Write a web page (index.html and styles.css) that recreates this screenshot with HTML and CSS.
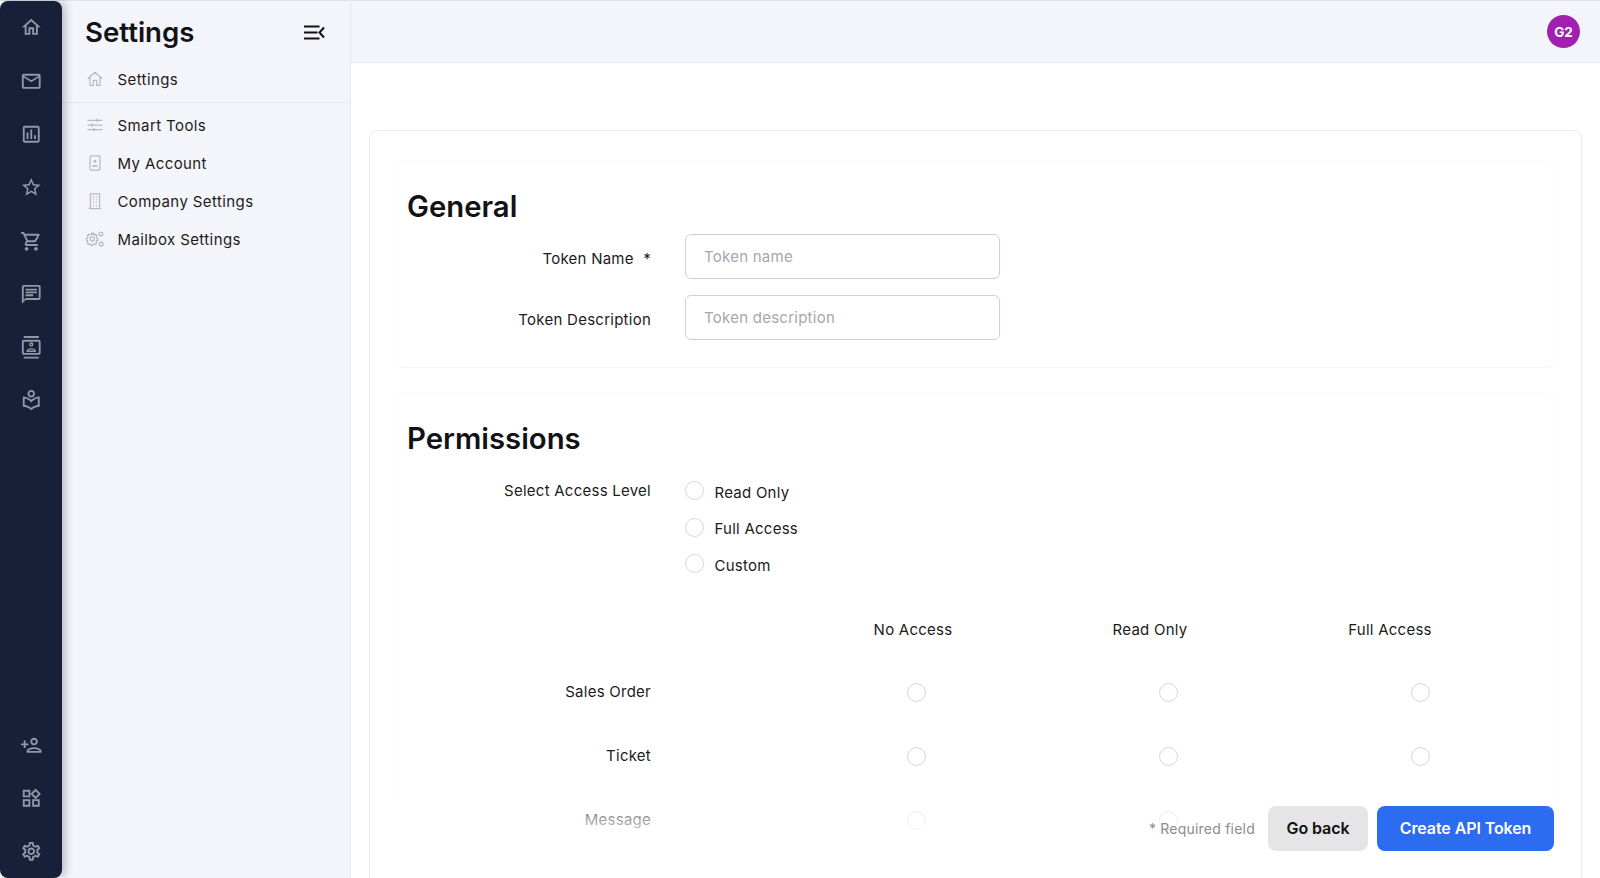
FILE: index.html
```html
<!DOCTYPE html>
<html lang="en">
<head>
<meta charset="utf-8">
<title>Settings</title>
<link rel="stylesheet" href="styles.css">
</head>
<body>
<div class="app">
  <nav class="rail">
    <div class="rail-item"><svg viewBox="0 0 24 24"><path d="M12 5.69l5 4.5V18h-2v-6H9v6H7v-7.81l5-4.5M12 3L2 12h3v8h6v-6h2v6h6v-8h3L12 3z"/></svg></div>
    <div class="rail-item"><svg viewBox="0 0 24 24"><path d="M20 4H4c-1.1 0-2 .9-2 2v12c0 1.1.9 2 2 2h16c1.1 0 2-.9 2-2V6c0-1.1-.9-2-2-2zm0 14H4V8l8 5 8-5v10zm-8-7L4 6h16l-8 5z"/></svg></div>
    <div class="rail-item"><svg viewBox="0 0 24 24"><path d="M19 3H5c-1.1 0-2 .9-2 2v14c0 1.1.9 2 2 2h14c1.1 0 2-.9 2-2V5c0-1.1-.9-2-2-2zm0 16H5V5h14v14zM7 10h2v7H7zm4-3h2v10h-2zm4 6h2v4h-2z"/></svg></div>
    <div class="rail-item"><svg viewBox="0 0 24 24"><path d="M22 9.24l-7.19-.62L12 2 9.19 8.63 2 9.24l5.46 4.73L5.82 21 12 17.27 18.18 21l-1.63-7.03L22 9.24zM12 15.4l-3.76 2.27 1-4.28-3.32-2.88 4.38-.38L12 6.1l1.71 4.04 4.38.38-3.32 2.88 1 4.28L12 15.4z"/></svg></div>
    <div class="rail-item"><svg viewBox="0 0 24 24"><path d="M15.55 13c.75 0 1.41-.41 1.75-1.03l3.58-6.49c.37-.66-.11-1.48-.87-1.48H5.21l-.94-2H1v2h2l3.6 7.59-1.35 2.44C4.52 15.37 5.48 17 7 17h12v-2H7l1.1-2h7.45zM6.16 6h12.15l-2.76 5H8.53L6.16 6zM7 18c-1.1 0-1.99.9-1.99 2S5.9 22 7 22s2-.9 2-2-.9-2-2-2zm10 0c-1.1 0-1.99.9-1.99 2s.89 2 1.99 2 2-.9 2-2-.9-2-2-2z"/></svg></div>
    <div class="rail-item"><svg viewBox="0 0 24 24"><path d="M20 2H4c-1.1 0-2 .9-2 2v18l4-4h14c1.1 0 2-.9 2-2V4c0-1.1-.9-2-2-2zm0 14H6l-2 2V4h16v12zM6 12h8v2H6zM6 9h12v2H6zM6 6h12v2H6z"/></svg></div>
    <div class="rail-item"><svg viewBox="0 0 24 24"><path d="M20 0H4v2h16V0zM4 24h16v-2H4v2zM20 4H4c-1.1 0-2 .9-2 2v12c0 1.1.9 2 2 2h16c1.1 0 2-.9 2-2V6c0-1.1-.9-2-2-2zm0 14H4V6h16v12zm-8-6.75c1.24 0 2.25-1.01 2.25-2.25S13.24 6.75 12 6.75 9.75 7.76 9.75 9s1.01 2.25 2.25 2.25zm0-3c.41 0 .75.34.75.75s-.34.75-.75.75-.75-.34-.75-.75.34-.75.75-.75zM17 15.99c0-2.09-3.31-2.99-5-2.99s-5 .9-5 2.99V17h10v-1.01zM8.81 15.5c.61-.52 2.03-1 3.19-1 1.17 0 2.59.48 3.2 1H8.81z"/></svg></div>
    <div class="rail-item"><svg viewBox="0 0 24 24"><path d="M12 9c2.21 0 4-1.79 4-4s-1.79-4-4-4-4 1.79-4 4 1.79 4 4 4zm0-6c1.1 0 2 .9 2 2s-.9 2-2 2-2-.9-2-2 .9-2 2-2zm0 8.55C9.64 9.35 6.48 8 3 8v11c3.48 0 6.64 1.35 9 3.55 2.36-2.19 5.52-3.55 9-3.55V8c-3.48 0-6.64 1.35-9 3.55zm7 5.58c-2.53.34-4.93 1.3-7 2.82-2.06-1.52-4.47-2.49-7-2.83v-6.95c2.1.38 4.05 1.35 5.64 2.83L12 14.28l1.36-1.27c1.59-1.48 3.54-2.45 5.64-2.83v6.95z"/></svg></div>
    <div class="rail-item rail-push"><svg viewBox="0 0 24 24"><path d="M15 12c2.21 0 4-1.79 4-4s-1.79-4-4-4-4 1.79-4 4 1.79 4 4 4zm0-6c1.1 0 2 .9 2 2s-.9 2-2 2-2-.9-2-2 .9-2 2-2zm0 8c-2.67 0-8 1.34-8 4v2h16v-2c0-2.66-5.33-4-8-4zm-6 4c.22-.72 3.31-2 6-2 2.7 0 5.8 1.29 6 2H9zm-3-3v-3h3v-2H6V7H4v3H1v2h3v3z"/></svg></div>
    <div class="rail-item"><svg viewBox="0 0 24 24"><path d="M16.66 4.52l2.83 2.83-2.83 2.83-2.83-2.83 2.83-2.83M9 5v4H5V5h4m10 10v4h-4v-4h4M9 15v4H5v-4h4m7.66-13.31L11 7.34 16.66 13l5.66-5.66-5.66-5.65zM11 3H3v8h8V3zm10 10h-8v8h8v-8zm-10 0H3v8h8v-8z"/></svg></div>
    <div class="rail-item"><svg viewBox="0 0 24 24"><path d="M19.43 12.98c.04-.32.07-.64.07-.98 0-.34-.03-.66-.07-.98l2.11-1.65c.19-.15.24-.42.12-.64l-2-3.46c-.09-.16-.26-.25-.44-.25-.06 0-.12.01-.17.03l-2.49 1c-.52-.4-1.08-.73-1.69-.98l-.38-2.65C14.46 2.18 14.25 2 14 2h-4c-.25 0-.46.18-.49.42l-.38 2.65c-.61.25-1.17.59-1.69.98l-2.49-1c-.06-.02-.12-.03-.18-.03-.17 0-.34.09-.43.25l-2 3.46c-.13.22-.07.49.12.64l2.11 1.65c-.04.32-.07.65-.07.98 0 .33.03.66.07.98l-2.11 1.65c-.19.15-.24.42-.12.64l2 3.46c.09.16.26.25.44.25.06 0 .12-.01.17-.03l2.49-1c.52.4 1.08.73 1.69.98l.38 2.65c.03.24.24.42.49.42h4c.25 0 .46-.18.49-.42l.38-2.65c.61-.25 1.17-.59 1.69-.98l2.49 1c.06.02.12.03.18.03.17 0 .34-.09.43-.25l2-3.46c.12-.22.07-.49-.12-.64l-2.11-1.65zm-1.98-1.71c.04.31.05.52.05.73 0 .21-.02.43-.05.73l-.14 1.13.89.7 1.08.84-.7 1.21-1.27-.51-1.04-.42-.9.68c-.43.32-.84.56-1.25.73l-1.06.43-.16 1.13-.2 1.35h-1.4l-.19-1.35-.16-1.13-1.06-.43c-.43-.18-.83-.41-1.23-.71l-.91-.7-1.06.43-1.27.51-.7-1.21 1.08-.84.89-.7-.14-1.13c-.03-.31-.05-.54-.05-.74s.02-.43.05-.73l.14-1.13-.89-.7-1.08-.84.7-1.21 1.27.51 1.04.42.9-.68c.43-.32.84-.56 1.25-.73l1.06-.43.16-1.13.2-1.35h1.39l.19 1.35.16 1.13 1.06.43c.43.18.83.41 1.23.71l.91.7 1.06-.43 1.27-.51.7 1.21-1.07.85-.89.7.14 1.13zM12 8c-2.21 0-4 1.79-4 4s1.79 4 4 4 4-1.79 4-4-1.79-4-4-4zm0 6c-1.1 0-2-.9-2-2s.9-2 2-2 2 .9 2 2-.9 2-2 2z"/></svg></div>
  </nav>

  <aside class="subnav">
    <div class="subnav-head">
      <h1 class="subnav-title">Settings</h1>
      <svg class="collapse" viewBox="0 0 21 15"><path d="M0 1.500h15.500M0 7.500h13.500M0 13.500h15.500M20 2.500l-4.500 5 4.500 5"/></svg>
    </div>
    <div class="subnav-item subnav-root">
      <svg class="sub-icon" viewBox="0 0 24 24"><path d="M12 3.800l8.500 7.700M3.500 11.500l8.500-7.700M6 10v9.500h4v-6h4v6h4V10"/></svg>
      <span>Settings</span>
    </div>
    <div class="subnav-list">
      <div class="subnav-item">
        <svg class="sub-icon" viewBox="0 0 24 24"><path d="M3 6.500h18M3 12h18M3 17.500h18M14.500 4.500v4M8 10v4M11 15.500v4"/></svg>
        <span>Smart Tools</span>
      </div>
      <div class="subnav-item">
        <svg class="sub-icon" viewBox="0 0 24 24"><rect x="6" y="3.500" width="12" height="17" rx="1.500"/><circle class="sub-fill" cx="12" cy="10" r="1.800"/><path class="sub-fill" d="M8.500 16.500h7v-1.200c-1-1.300-6-1.300-7 0z"/></svg>
        <span>My Account</span>
      </div>
      <div class="subnav-item">
        <svg class="sub-icon" viewBox="0 0 24 24"><path d="M4.500 21h15M6.500 21V3.500h11V21M9.500 7h1.500M13 7h1.500M9.500 10.500h1.500M13 10.500h1.500M9.500 14h1.500M13 14h1.500M9.500 17.500h1.500M13 17.500h1.500"/></svg>
        <span>Company Settings</span>
      </div>
      <div class="subnav-item">
        <svg class="sub-icon" viewBox="0 0 24 24"><path d="M9.500 6.500l1.800.6 1.300-.7 1.500 1.500-.7 1.400.6 1.700 1.500.5v2l-1.500.5-.6 1.700.7 1.400-1.500 1.500-1.300-.7-1.800.6-.5 1.500H7.800l-.5-1.500-1.700-.6-1.400.7-1.500-1.500.7-1.400-.6-1.700-1.300-.5v-2l1.500-.5.6-1.700-.7-1.400 1.500-1.500 1.400.7 1.700-.6.5-1.500h2.200z"/><circle cx="8.800" cy="12" r="2.500"/><circle cx="19" cy="6" r="2.300"/><circle cx="19.500" cy="18" r="2.300"/></svg>
        <span>Mailbox Settings</span>
      </div>
    </div>
  </aside>

  <div class="main">
    <header class="topbar"><div class="avatar">G2</div></header>
    <main class="content">
      <div class="card">
        <section class="section section-general">
          <h2 class="section-title">General</h2>
          <div class="field">
            <label class="field-label">Token Name <span class="req">*</span></label>
            <input class="text-input" type="text" placeholder="Token name">
          </div>
          <div class="field">
            <label class="field-label">Token Description</label>
            <input class="text-input" type="text" placeholder="Token description">
          </div>
        </section>
        <section class="section section-perms">
          <h2 class="section-title">Permissions</h2>
          <div class="access">
            <div class="access-label">Select Access Level</div>
            <div class="access-options">
              <label class="option"><input class="radio" type="radio" name="lvl"><span>Read Only</span></label>
              <label class="option"><input class="radio" type="radio" name="lvl"><span>Full Access</span></label>
              <label class="option"><input class="radio" type="radio" name="lvl"><span>Custom</span></label>
            </div>
          </div>
          <div class="perm-head">
            <span>No Access</span><span>Read Only</span><span>Full Access</span>
          </div>
          <div class="perm-row">
            <div class="perm-name">Sales Order</div>
            <div class="perm-cell"><input class="radio" type="radio" name="so"></div>
            <div class="perm-cell"><input class="radio" type="radio" name="so"></div>
            <div class="perm-cell"><input class="radio" type="radio" name="so"></div>
          </div>
          <div class="perm-row">
            <div class="perm-name">Ticket</div>
            <div class="perm-cell"><input class="radio" type="radio" name="ti"></div>
            <div class="perm-cell"><input class="radio" type="radio" name="ti"></div>
            <div class="perm-cell"><input class="radio" type="radio" name="ti"></div>
          </div>
          <div class="perm-row">
            <div class="perm-name">Message</div>
            <div class="perm-cell"><input class="radio" type="radio" name="me"></div>
            <div class="perm-cell"><input class="radio" type="radio" name="me"></div>
            <div class="perm-cell"><input class="radio" type="radio" name="me"></div>
          </div>
        </section>
      </div>
    </main>
    <div class="footer">
      <span class="req-note">* Required field</span>
      <button class="btn btn-back" type="button">Go back</button>
      <button class="btn btn-primary" type="button">Create API Token</button>
    </div>
  </div>
</div>
</body>
</html>
```

FILE: styles.css
```css
* { box-sizing: border-box; }
html, body { margin: 0; height: 100%; }
body {
  font-family: Inter, "Liberation Sans", sans-serif;
  color: #1b1b20;
  background: #fff;
  overflow: hidden;
}
.app { display: flex; height: 878px; border-top: 1px solid #e0e1e8; }

.rail {
  flex: 0 0 62px;
  display: flex;
  flex-direction: column;
  background: #182039;
  border-radius: 8px;
  box-shadow: 3px 0 8px rgba(20, 24, 50, .28);
  position: relative;
  z-index: 2;
}
.rail-item { height: 53.300px; flex: none; display: flex; align-items: center; justify-content: center; }
.rail-item svg { width: 22.500px; height: 22.500px; fill: #9296a5; }
.rail-push { margin-top: auto; }

.subnav { flex: 0 0 289px; background: #f4f5fa; border-right: 1px solid #e6e7f0; }
.subnav-head { height: 60px; padding: 2px 25px 0 23px; display: flex; align-items: center; justify-content: space-between; }
.subnav-title { margin: 0; font-size: 27.600px; font-weight: 600; line-height: 32px; color: #121216; }
.collapse { width: 21px; height: 15px; fill: none; stroke: #111; stroke-width: 2; }
.subnav-item {
  display: flex;
  align-items: center;
  gap: 12.500px;
  height: 38px;
  padding-left: 23px;
  font-size: 15px;
  letter-spacing: .4px;
  color: #1b1b20;
}
.subnav-root { height: 42px; padding-bottom: 5px; border-bottom: 1px solid #e6e7f0; }
.subnav-list { padding-top: 3px; }
.sub-icon { width: 20px; height: 20px; flex: none; fill: none; stroke: #b7b9c3; stroke-width: 1.500; }
.sub-fill { fill: #b7b9c3; stroke: none; }

.main { flex: 1; min-width: 0; display: flex; flex-direction: column; position: relative; }
.topbar {
  flex: 0 0 62px;
  background: #f4f5fa;
  border-bottom: 1px solid #e6e7f0;
  display: flex;
  align-items: center;
  justify-content: flex-end;
  padding-right: 20px;
}
.avatar {
  width: 33px;
  height: 33px;
  border-radius: 50%;
  background: #a020b0;
  color: #fff;
  font-size: 13.500px;
  font-weight: 700;
  display: flex;
  align-items: center;
  justify-content: center;
}
.content { flex: 1; min-height: 0; overflow: hidden; padding: 67px 18px 0 18px; }
.card { border: 1px solid #e8e8f4; border-radius: 8px; padding: 29px 27px 0; height: 760px; }
.section { border: 1px solid #fcfcfd; border-radius: 6px; padding: 28px 9px 0; }
.section-general { height: 208px; margin-bottom: 24px; border-bottom-color: #f3f3f8; }
.section-perms { border-bottom: 0; height: 600px; }
.section-title { margin: 0 0 9px; font-size: 29.300px; line-height: 36px; font-weight: 600; color: #121216; }

.field { display: flex; align-items: center; gap: 34px; margin-bottom: 16px; margin-left: -9px; }
.field-label { width: 253px; text-align: right; font-size: 15px; letter-spacing: .25px; padding-top: 3px; }
.req { margin-left: 5px; }
.text-input {
  width: 315px;
  height: 45px;
  border: 1px solid #cdcde4;
  border-radius: 6px;
  padding: 0 18px;
  font: 15px Inter, "Liberation Sans", sans-serif;
  letter-spacing: .25px;
  background: #fff;
  color: #1b1b20;
}
.text-input::placeholder { color: #a6a6ae; opacity: 1; }

.access { display: flex; gap: 34px; margin-left: -9px; margin-top: 24px; }
.access-label { width: 253px; text-align: right; font-size: 15px; letter-spacing: .25px; line-height: 19px; }
.access-options { display: flex; flex-direction: column; gap: 17.500px; }
.option { display: flex; align-items: center; gap: 10.500px; height: 19px; font-size: 15px; letter-spacing: .25px; }
.option span { position: relative; top: 1.500px; }
.radio {
  appearance: none;
  -webkit-appearance: none;
  margin: 0;
  width: 19px;
  height: 19px;
  border: 1.500px solid #d5d5e8;
  border-radius: 50%;
  background: #fff;
  flex: none;
}

.perm-head {
  display: grid;
  grid-template-columns: 240px 234px 246px;
  margin-left: 386px;
  margin-top: 47px;
  font-size: 15px;
  letter-spacing: .25px;
  line-height: 20px;
  text-align: center;
}
.perm-row {
  display: grid;
  grid-template-columns: 392px 252px 252px 252px;
  margin-left: -9px;
  height: 64px;
  align-items: center;
  font-size: 15px;
  letter-spacing: .25px;
}
.perm-head + .perm-row { margin-top: 20px; }
.perm-name { width: 253px; text-align: right; position: relative; top: -1px; }
.perm-cell { display: flex; justify-content: center; }

.footer {
  position: absolute;
  left: 46px;
  right: 46px;
  bottom: 0;
  height: 92px;
  padding-bottom: 27px;
  display: flex;
  align-items: flex-end;
  justify-content: flex-end;
  gap: 9px;
  background: linear-gradient(rgba(255,255,255,0), rgba(255,255,255,.85) 55%, #fff);
}
.req-note { font-size: 14px; letter-spacing: .22px; color: #8b8b92; line-height: 44px; margin-right: 4px; }
.btn {
  height: 45px;
  border: 0;
  border-radius: 8px;
  padding: 0 0 1px;
  font: 600 16px Inter, "Liberation Sans", sans-serif;
  letter-spacing: -.1px;
}
.btn-back { width: 100px; background: #e5e4e6; color: #111; }
.btn-primary { width: 177px; background: #2b6cf0; color: #fff; }
```
